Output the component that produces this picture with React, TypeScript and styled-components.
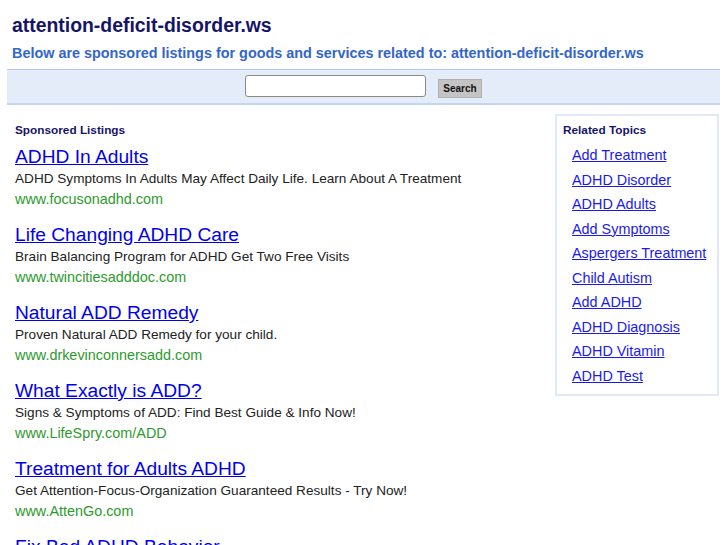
import React from 'react';
import styled, { createGlobalStyle } from 'styled-components';

const GlobalStyle = createGlobalStyle`
  body {
    margin: 0;
    background: #ffffff;
    font-family: "Liberation Sans", Arial, sans-serif;
  }
`;

const Page = styled.div`
  padding: 0 7px;
`;

const Header = styled.header`
  padding: 14px 5px 0;
`;

const Domain = styled.h1`
  margin: 0;
  font-size: 19.4px;
  line-height: 22px;
  font-weight: bold;
  color: #151567;
`;

const Tagline = styled.h2`
  margin: 8px 0 0;
  font-size: 14.4px;
  line-height: 18px;
  font-weight: bold;
  color: #3366cc;
`;

const SearchBand = styled.form`
  margin-top: 7px;
  height: 33px;
  border-top: 1px solid #b2c6ee;
  border-bottom: 2px solid #c4d4f4;
  background: #e5ecf9;
  display: flex;
  align-items: center;
  justify-content: center;
  gap: 12px;
`;

const SearchInput = styled.input`
  box-sizing: border-box;
  width: 181px;
  height: 22px;
  border: 1px solid #8a8a8a;
  border-radius: 3px;
  background: #fff;
  margin: 0 0 1px;
`;

const SearchButton = styled.button`
  box-sizing: border-box;
  width: 44px;
  height: 19px;
  margin-top: 3px;
  padding: 0;
  border: 1px solid #b0b0b0;
  background: #c4c4c4;
  font-family: "Liberation Sans", Arial, sans-serif;
  font-size: 10px;
  font-weight: bold;
  color: #111;
`;

const Content = styled.div`
  display: flex;
  align-items: flex-start;
  gap: 12px;
`;

const Listings = styled.main`
  flex: 1;
  padding: 18.5px 0 0 8px;
`;

const SectionLabel = styled.div`
  font-size: 11.8px;
  line-height: 12px;
  font-weight: bold;
  color: #151567;
`;

const ListingList = styled.div`
  margin-top: 10.5px;
`;

const Listing = styled.div`
  margin-bottom: 15px;
`;

const ListingTitle = styled.a`
  display: block;
  margin-bottom: 1px;
  font-size: 19.2px;
  line-height: 22px;
  color: #0000ee;
  text-decoration: underline;
`;

const ListingText = styled.div`
  font-size: 13.6px;
  line-height: 20px;
  color: #222;
`;

const ListingUrl = styled.div`
  font-size: 14.4px;
  line-height: 20px;
  color: #2d9a2d;
`;

const Sidebar = styled.aside`
  box-sizing: border-box;
  width: 164px;
  margin: 9px 1px 0 0;
  border: 2px solid #e1e9f8;
  padding: 7.5px 6px 6px 6px;
`;

const TopicList = styled.ul`
  list-style: none;
  margin: 7.5px 0 0;
  padding: 0 0 0 9px;
`;

const Topic = styled.li`
  font-size: 14.4px;
  line-height: 24.5px;

  a {
    color: #1a1aee;
    text-decoration: underline;
  }
`;

const listings = [
  {
    title: 'ADHD In Adults',
    text: 'ADHD Symptoms In Adults May Affect Daily Life. Learn About A Treatment',
    url: 'www.focusonadhd.com',
  },
  {
    title: 'Life Changing ADHD Care',
    text: 'Brain Balancing Program for ADHD Get Two Free Visits',
    url: 'www.twincitiesadddoc.com',
  },
  {
    title: 'Natural ADD Remedy',
    text: 'Proven Natural ADD Remedy for your child.',
    url: 'www.drkevinconnersadd.com',
  },
  {
    title: 'What Exactly is ADD?',
    text: 'Signs & Symptoms of ADD: Find Best Guide & Info Now!',
    url: 'www.LifeSpry.com/ADD',
  },
  {
    title: 'Treatment for Adults ADHD',
    text: 'Get Attention-Focus-Organization Guaranteed Results - Try Now!',
    url: 'www.AttenGo.com',
  },
  {
    title: 'Fix Bad ADHD Behavior',
    text: 'Proven Program Helps Kids With ADHD Behave Better. Learn More.',
    url: 'www.behavioradhd.com',
  },
];

const topics = [
  'Add Treatment',
  'ADHD Disorder',
  'ADHD Adults',
  'Add Symptoms',
  'Aspergers Treatment',
  'Child Autism',
  'Add ADHD',
  'ADHD Diagnosis',
  'ADHD Vitamin',
  'ADHD Test',
];

export default function App() {
  return (
    <Page>
      <GlobalStyle />
      <Header>
        <Domain>attention-deficit-disorder.ws</Domain>
        <Tagline>
          Below are sponsored listings for goods and services related to: attention-deficit-disorder.ws
        </Tagline>
      </Header>

      <SearchBand onSubmit={(e) => e.preventDefault()}>
        <SearchInput type="text" />
        <SearchButton type="submit">Search</SearchButton>
      </SearchBand>

      <Content>
        <Listings>
          <SectionLabel>Sponsored Listings</SectionLabel>
          <ListingList>
            {listings.map((l) => (
              <Listing key={l.title}>
                <ListingTitle href="#">{l.title}</ListingTitle>
                <ListingText>{l.text}</ListingText>
                <ListingUrl>{l.url}</ListingUrl>
              </Listing>
            ))}
          </ListingList>
        </Listings>

        <Sidebar>
          <SectionLabel>Related Topics</SectionLabel>
          <TopicList>
            {topics.map((t) => (
              <Topic key={t}>
                <a href="#">{t}</a>
              </Topic>
            ))}
          </TopicList>
        </Sidebar>
      </Content>
    </Page>
  );
}
